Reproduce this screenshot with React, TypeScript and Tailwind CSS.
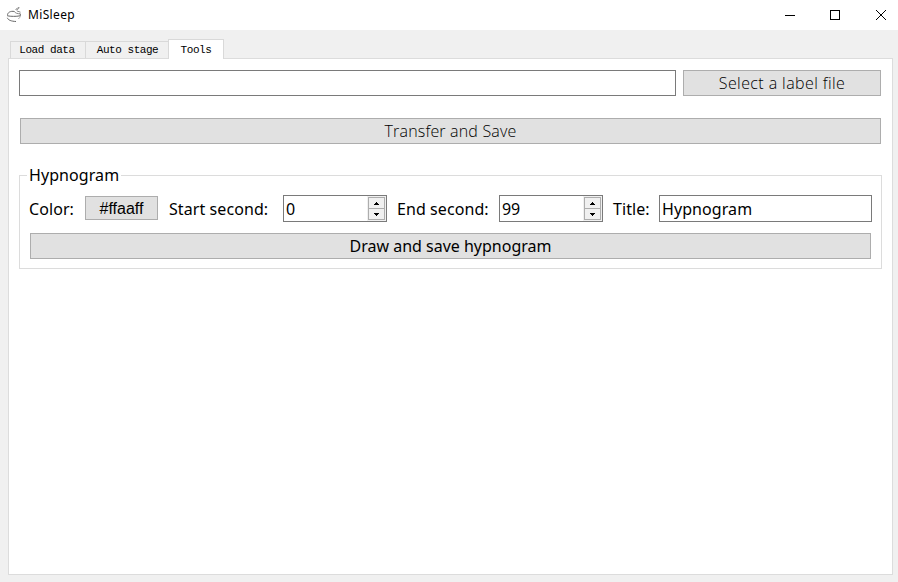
import React from "react";

const button =
  "flex items-center justify-center whitespace-nowrap border border-[#adadad] bg-[#e1e1e1] text-black";
const label = "block shrink-0 whitespace-nowrap leading-[26px] tracking-[0.08px]";

function SpinBox({ value }: { value: string }) {
  return (
    <div className="flex h-[27px] w-[104px] shrink-0 border border-[#7a7a7a] bg-white">
      <span className="flex-1 pl-[2px] leading-[26px] tracking-[-0.2px]">{value}</span>
      <div className="flex w-[19px] flex-col bg-[#f0f0f0] pt-px pl-px">
        <div className="flex h-[12px] w-[17px] items-center justify-center border border-[#adadad] bg-[#f0f0f0]">
          <svg width="5" height="3" viewBox="0 0 5 3" shapeRendering="crispEdges">
            <path d="M2 0h1v1h1v1h1v1H0V2h1V1h1z" />
          </svg>
        </div>
        <div className="-mt-px flex h-[12px] w-[17px] items-center justify-center border border-[#adadad] bg-[#f0f0f0]">
          <svg width="5" height="3" viewBox="0 0 5 3" shapeRendering="crispEdges">
            <path d="M0 0h5v1H4v1H3v1H2V2H1V1H0z" />
          </svg>
        </div>
      </div>
    </div>
  );
}

function TitleBar() {
  return (
    <header className="flex h-[30px] items-center bg-white">
      <svg className="ml-[6px] shrink-0" width="17" height="18" viewBox="0 0 17 18" fill="none" stroke="#666" strokeWidth="1">
        <path d="M1.500 9.500C1.300 6.500 4.500 4.700 8.500 5.500" />
        <path d="M1.300 9.800c3.500.7 8.500.8 13 0V8" />
        <path d="M1.300 11.800c.8 2.300 4 3.500 8.700 3.700" />
        <path d="M14.300 10c-.3 1.300-1 2.300-2 3" stroke="#aaa" />
        <path d="M8.500 5.500c.5 1.700 3 2.300 6 2.200M9.500 3.500c1.500-1.500 2.800-1 3.500-2.500M13 1.300c-.2 1.600-1.200 2.300-2.800 2.700M11 5l3.500 1.200" stroke="#888" />
      </svg>
      <span className="ml-[5px] text-[12px] leading-[18px] tracking-[0.35px]">MiSleep</span>
      <div className="ml-auto flex items-center pr-[11px]">
        <svg width="102" height="12" viewBox="0 0 102 12" fill="none" stroke="#000" strokeWidth="1">
          <path d="M0 6.500h10M45.500 1.500h9v9h-9z" shapeRendering="crispEdges" />
          <path d="M91 1l10 10M101 1L91 11" />
        </svg>
      </div>
    </header>
  );
}

export default function App() {
  return (
    <div className="h-[582px] w-[898px] overflow-hidden bg-[#f0f0f0] font-['Noto_Sans','Open_Sans',sans-serif] text-[16px] text-black">
      <TitleBar />
      <nav className="relative z-10 mt-[9px] ml-[10px] flex h-[20px] items-end font-['Liberation_Mono',monospace] text-[11px] tracking-[-0.45px] whitespace-nowrap">
        <div className="mb-px flex h-[17px] w-[75px] items-center justify-center border border-r-0 border-b-0 border-[#d9d9d9] pt-px pr-[2px]">Load data</div>
        <div className="mb-px flex h-[17px] w-[83px] items-center justify-center border border-r-0 border-b-0 border-[#d9d9d9] pt-px pl-px">Auto stage</div>
        <div className="flex h-[20px] w-[56px] items-center justify-center border border-b-0 border-[#d9d9d9] bg-white pt-px">Tools</div>
      </nav>
      <main className="-mt-px ml-[8px] h-[517px] w-[885px] border border-[#dcdcdc] bg-white px-[10px] pt-[11px]">
        <div className="flex gap-[7px]">
          <input aria-label="Label file" className="h-[26px] w-[657px] border border-[#7a7a7a] bg-white px-[3px] outline-none" />
          <button className={`${button} h-[26px] w-[198px] font-['Open_Sans','Noto_Sans',sans-serif] font-light tracking-[0.41px]`}>
            Select a label file
          </button>
        </div>
        <button className={`${button} mt-[22px] ml-px h-[26px] w-[861px] font-['Open_Sans','Noto_Sans',sans-serif] font-light tracking-[0.18px]`}>
          Transfer and Save
        </button>
        <section className="mt-[31px] h-[94px] w-[863px] border border-[#dcdcdc]">
          <h2 className="-mt-[14px] ml-[7px] h-[26px] w-[94px] bg-white pl-[2px] leading-[26px] font-normal tracking-[0.08px]">Hypnogram</h2>
          <div className="mt-[7px] flex h-[27px] items-center pl-[9px]">
            <span className={`${label} w-[56px]`}>Color:</span>
            <button className={`${button} mb-px h-[24px] w-[73px] shrink-0 pt-px font-['Liberation_Sans',sans-serif]`}>#ffaaff</button>
            <span className={`${label} ml-[11px] w-[114px]`}>Start second:</span>
            <SpinBox value="0" />
            <span className={`${label} ml-[10px] w-[102px]`}>End second:</span>
            <SpinBox value="99" />
            <span className={`${label} ml-[10px] w-[46px]`}>Title:</span>
            <input aria-label="Title" defaultValue="Hypnogram" className="h-[27px] w-[213px] border border-[#7a7a7a] bg-white pl-[2px] tracking-[0.08px] outline-none" />
          </div>
          <button className={`${button} mt-[11px] ml-[10px] h-[26px] w-[841px]`}>Draw and save hypnogram</button>
        </section>
      </main>
    </div>
  );
}
